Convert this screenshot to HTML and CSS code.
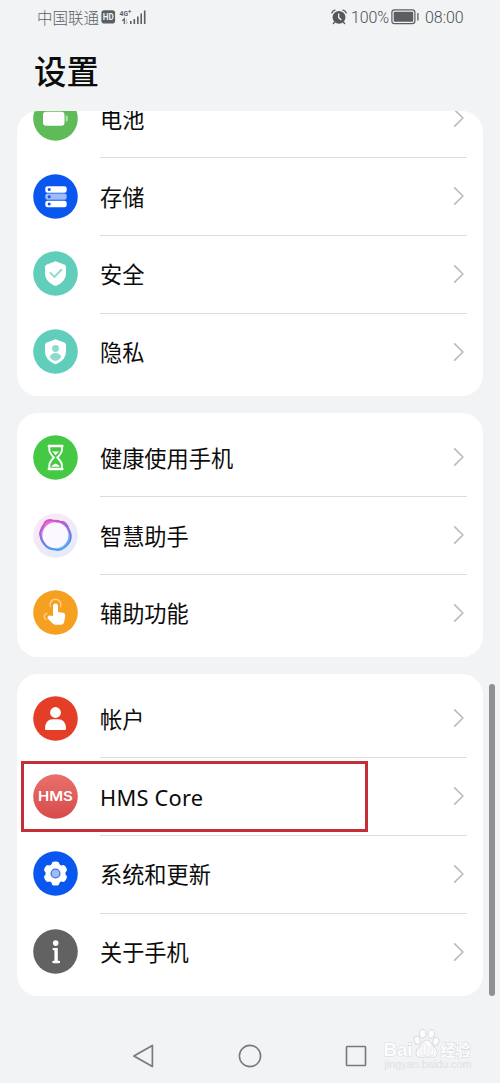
FILE: index.html
```html
<!DOCTYPE html>
<html lang="zh-CN">
<head>
<meta charset="utf-8">
<title>设置</title>
<link rel="stylesheet" href="styles.css">
</head>
<body>
<svg class="defs" width="0" height="0" aria-hidden="true">
  <defs>
    <symbol id="chevron" viewBox="0 0 12 20"><path d="M1.7 1.9 L9.9 10 L1.7 18.1" fill="none" stroke="#bbbcbd" stroke-width="1.7" stroke-linejoin="round" stroke-linecap="round"/></symbol>
    <linearGradient id="hms" x1="0" y1="0" x2="0" y2="1"><stop offset="0" stop-color="#e9706a"/><stop offset="1" stop-color="#d64b4c"/></linearGradient>
    <linearGradient id="ring" x1="0.15" y1="0.1" x2="0.8" y2="0.95"><stop offset="0" stop-color="#e04ccb"/><stop offset="0.5" stop-color="#7b6fe0"/><stop offset="1" stop-color="#41a8ec"/></linearGradient>
    <linearGradient id="halo" x1="0.2" y1="0" x2="0.7" y2="1"><stop offset="0" stop-color="#fbeaf3"/><stop offset="1" stop-color="#e5eafb"/></linearGradient>
  </defs>
</svg>
<div class="phone">
  <header class="status">
    <div class="status-left">
      <span class="carrier">中国联通</span>
      <svg class="hd" width="15" height="14" viewBox="0 0 15 14"><rect x="0.4" y="0.2" width="13.7" height="13.3" rx="2.8" fill="#5c5f62"/><text x="7.3" y="10" text-anchor="middle" textLength="11" lengthAdjust="spacingAndGlyphs" class="hd-text">HD</text></svg>
      <svg class="signal" width="28" height="18" viewBox="0 0 28 18">
        <text x="0.5" y="7.6" textLength="8.5" lengthAdjust="spacingAndGlyphs" class="net">4G</text>
        <path d="M9.2 3.4h3M10.7 1.9v3" stroke="#5c5f62" stroke-width=".8"/>
        <path d="M5.3 16v-5.2l-2 2" fill="none" stroke="#5c5f62" stroke-width="1.2"/>
        <path d="M7.3 11v4.8l1.5-1.6" fill="none" stroke="#babcbe" stroke-width="1"/>
        <path d="M11.8 16v-3M15.3 16v-5M18.8 16V8.5M22.2 16V5.5M25.7 16V2.5" stroke="#5c5f62" stroke-width="1.6"/>
      </svg>
    </div>
    <div class="status-right">
      <svg class="alarm" width="16" height="16" viewBox="0 0 16 16"><circle cx="8" cy="8.3" r="6.4" fill="#56595c"/><path d="M.8 4 Q1.7 1.6 4 1.1M15.2 4 Q14.3 1.6 12 1.1M3.7 13 L2.4 14.5M12.3 13 L13.6 14.5" fill="none" stroke="#56595c" stroke-width="1.3" stroke-linecap="round"/><path d="M7.7 4.6v4l2.7 2.4" fill="none" stroke="#f1f3f5" stroke-width="1.3"/></svg>
      <span class="percent">100%</span>
      <svg class="battery" width="29" height="16" viewBox="0 0 29 16"><rect x=".9" y=".9" width="23" height="13.7" rx="2.7" fill="none" stroke="#5c5f62" stroke-width="1.2"/><rect x="2.7" y="2.7" width="19.5" height="10.1" rx="1" fill="#5c5f62"/><path d="M26.9 4v7.5" stroke="#5c5f62" stroke-width="1.3"/></svg>
      <span class="clock">08:00</span>
    </div>
  </header>
  <h1 class="title"><span>设置</span></h1>

  <main class="list">
    <section class="card card-scrolled">
      <div class="row">
        <svg class="icon" viewBox="0 0 45 45"><circle cx="22.5" cy="22.5" r="22.3" fill="#5fbb58"/><rect x="10" y="15.7" width="21.5" height="14" rx="3.2" fill="#fff"/><rect x="32.7" y="19.5" width="2" height="6" rx=".8" fill="#b9e1b6"/></svg>
        <div class="body"><span class="label">电池</span><svg class="chev"><use href="#chevron"/></svg></div>
      </div>
      <div class="row">
        <svg class="icon" viewBox="0 0 45 45"><circle cx="22.5" cy="22.5" r="22.3" fill="#0a57f0"/><rect x="12.3" y="12.2" width="21.4" height="6.5" rx="2.2" fill="#fff"/><rect x="12.3" y="19.6" width="21.4" height="6.2" rx="2.2" fill="#9dbcf9"/><rect x="12.3" y="26.8" width="21.4" height="6.5" rx="2.2" fill="#fff"/><g fill="#0a57f0"><circle cx="16.2" cy="15.5" r="1.5"/><circle cx="16.2" cy="22.7" r="1.5"/><circle cx="16.2" cy="30" r="1.5"/></g></svg>
        <div class="body"><span class="label">存储</span><svg class="chev"><use href="#chevron"/></svg></div>
      </div>
      <div class="row">
        <svg class="icon" viewBox="0 0 45 45"><circle cx="22.5" cy="22.5" r="22.3" fill="#61cdbb"/><path d="M22.5 10.2 L31.2 13.4 Q33 14.1 33 16 V22.6 Q33 30.5 24 34.4 Q22.5 35 21 34.4 Q12 30.5 12 22.6 V16 Q12 14.1 13.8 13.4 Z" fill="#fff"/><path d="M17 21.4 L21.4 25.9 L28.8 18.2" fill="none" stroke="#8bdccd" stroke-width="2"/></svg>
        <div class="body"><span class="label">安全</span><svg class="chev"><use href="#chevron"/></svg></div>
      </div>
      <div class="row">
        <svg class="icon" viewBox="0 0 45 45"><circle cx="22.5" cy="22.5" r="22.3" fill="#61cdbb"/><path d="M22.5 10.2 L31.2 13.4 Q33 14.1 33 16 V22.6 Q33 30.5 24 34.8 Q22.5 35.5 21 34.8 Q12 30.5 12 22.6 V16 Q12 14.1 13.8 13.4 Z" fill="#fff"/><circle cx="22.5" cy="19.5" r="3.4" fill="#8bdccd"/><path d="M16.7 28 Q18.2 24 22.5 24 Q26.8 24 28.3 28 Q26 31.5 22.5 32 Q19 31.5 16.7 28Z" fill="#8bdccd"/></svg>
        <div class="body"><span class="label">隐私</span><svg class="chev"><use href="#chevron"/></svg></div>
      </div>
    </section>

    <section class="card">
      <div class="row">
        <svg class="icon" viewBox="0 0 45 45"><circle cx="22.5" cy="22.5" r="22.3" fill="#45c945"/><path d="M15.8 11 H29.4 M15.8 34 H29.4" stroke="#fff" stroke-width="2.4" stroke-linecap="round"/><path d="M16.3 11.5 V15 Q16.5 18 20.9 22.5 Q16.5 27 16.3 30 V33.5 M28.9 11.5 V15 Q28.7 18 24.3 22.5 Q28.7 27 28.9 30 V33.5" fill="none" stroke="#fff" stroke-width="1.9"/><path d="M19 16 Q22.6 17.2 26.2 16 L22.6 20.3Z M18.2 31.8 Q19 29.8 22.5 28.6 Q26 29.8 26.8 31.8Z" fill="#fff"/></svg>
        <div class="body"><span class="label">健康使用手机</span><svg class="chev"><use href="#chevron"/></svg></div>
      </div>
      <div class="row">
        <svg class="icon" viewBox="0 0 45 45"><circle cx="22.5" cy="22.5" r="22.3" fill="url(#halo)"/><circle cx="22.3" cy="22.3" r="14" fill="#faf8fe"/><g fill="none" stroke="url(#ring)"><path d="M12 8.8 Q16 5.7 20 7.6 Q24 9 29.5 8.7 Q34 9.5 35.5 16 Q39.5 22 37.2 28 Q35 31.8 30.8 35 Q27 38.6 21.5 36.3 Q14.5 36.2 12.2 31.8 Q6.2 25 7 19.5 Q10.5 14.5 12 8.8Z" stroke-width="1.5"/><circle cx="22.4" cy="22.2" r="14.2" stroke-width="2.4" stroke-opacity=".75"/><ellipse cx="22.3" cy="22" rx="15.8" ry="14" transform="rotate(35 22.3 22)" stroke-width="1"/></g></svg>
        <div class="body"><span class="label">智慧助手</span><svg class="chev"><use href="#chevron"/></svg></div>
      </div>
      <div class="row">
        <svg class="icon" viewBox="0 0 45 45"><circle cx="22.5" cy="22.5" r="22.3" fill="#f6a021"/><path d="M17.5 17.2 A5.5 5.5 0 1 1 27.4 17.2 M14.3 23.5 Q11 24 11.3 27 Q11.6 29 13.5 30" fill="none" stroke="#fbd18b" stroke-width="1.5"/><path d="M20 26 V16 A2.5 2.5 0 0 1 25 16 V22 L30 22.8 Q32.5 23.4 32.2 26 L31.1 32.3 Q30.7 34.7 28.3 34.7 H22.7 Q21 34.7 19.5 33.2 L14.8 28.8 Q14 27.2 15.3 26 Q16.3 25 17.8 25.7 Z" fill="#fff"/></svg>
        <div class="body"><span class="label">辅助功能</span><svg class="chev"><use href="#chevron"/></svg></div>
      </div>
    </section>

    <section class="card">
      <div class="row">
        <svg class="icon" viewBox="0 0 45 45"><circle cx="22.5" cy="22.5" r="22.3" fill="#e43e27"/><circle cx="22.5" cy="16.5" r="5.4" fill="#fff"/><path d="M12 33 Q12 23.3 20 23.3 H25 Q33 23.3 33 33 Q33 34 32 34 H13 Q12 34 12 33Z" fill="#fff"/></svg>
        <div class="body"><span class="label">帐户</span><svg class="chev"><use href="#chevron"/></svg></div>
      </div>
      <div class="row">
        <svg class="icon" viewBox="0 0 45 45"><circle cx="22.5" cy="22.5" r="22.3" fill="url(#hms)"/><text x="5" y="27.4" textLength="34.8" lengthAdjust="spacingAndGlyphs" class="hms-text">HMS</text></svg>
        <div class="body"><span class="label latin">HMS Core</span><svg class="chev"><use href="#chevron"/></svg></div>
        <div class="highlight"></div>
      </div>
      <div class="row">
        <svg class="icon" viewBox="0 0 45 45"><circle cx="22.5" cy="22.5" r="22.3" fill="#0a57f0"/><g fill="#fff"><circle cx="22.5" cy="22.5" r="10"/><rect x="18.6" y="10.4" width="7.8" height="24.2" rx="3.2"/><rect x="18.6" y="10.4" width="7.8" height="24.2" rx="3.2" transform="rotate(60 22.5 22.5)"/><rect x="18.6" y="10.4" width="7.8" height="24.2" rx="3.2" transform="rotate(120 22.5 22.5)"/></g><circle cx="22.5" cy="22.5" r="4.4" fill="#9dbcf9" stroke="#3c74e6" stroke-width="1.3"/></svg>
        <div class="body"><span class="label">系统和更新</span><svg class="chev"><use href="#chevron"/></svg></div>
      </div>
      <div class="row">
        <svg class="icon" viewBox="0 0 45 45"><circle cx="22.5" cy="22.5" r="22.3" fill="#626262"/><circle cx="22.7" cy="14.1" r="2.8" fill="#fff"/><path d="M20.6 20.2 H23 M20.4 33 H26" fill="none" stroke="#fff" stroke-width="2.3" stroke-linecap="round"/><path d="M23.1 19.1v14" stroke="#fff" stroke-width="3.4"/></svg>
        <div class="body"><span class="label">关于手机</span><svg class="chev"><use href="#chevron"/></svg></div>
      </div>
    </section>
  </main>

  <nav class="navbar">
    <svg width="24" height="26" viewBox="0 0 24 26"><path d="M20.4 2.5 V23.5 L1.9 13Z" fill="none" stroke="#77797b" stroke-width="1.7" stroke-linejoin="round"/></svg>
    <svg width="24" height="26" viewBox="0 0 24 26"><circle cx="12" cy="13" r="10.6" fill="none" stroke="#77797b" stroke-width="1.6"/></svg>
    <svg width="24" height="26" viewBox="0 0 24 26"><rect x="2.5" y="3.5" width="19" height="19" rx=".7" fill="none" stroke="#77797b" stroke-width="1.6"/></svg>
  </nav>
  <div class="scrollbar"></div>
  <svg class="watermark" width="100" height="50" viewBox="0 0 100 50">
    <g fill="#fcfcfd" stroke="#d9dbde" stroke-width="1">
      <text x="3.5" y="36" textLength="29" lengthAdjust="spacingAndGlyphs" class="wm-brand">Bai</text>
      <ellipse cx="37.1" cy="20.2" rx="3" ry="4.1" transform="rotate(-12 37.1 20.2)"/><ellipse cx="42.8" cy="13.7" rx="3.2" ry="4.4"/><ellipse cx="51.2" cy="14" rx="3.2" ry="4.3" transform="rotate(12 51.2 14)"/><ellipse cx="55.8" cy="21.5" rx="3" ry="4" transform="rotate(15 55.8 21.5)"/>
      <path d="M46.5 20 Q50 20 52 24.5 Q57 29 57.2 32.5 Q57.4 37.5 52.5 37.3 Q46.5 36.5 41 37.3 Q35.7 37.5 35.9 32.5 Q36 29 41 25 Q43 20 46.5 20Z"/>
      <text x="39" y="34.8" textLength="15" lengthAdjust="spacingAndGlyphs" class="wm-du">du</text>
      <text x="60.5" y="35.5" textLength="30" lengthAdjust="spacingAndGlyphs" class="wm-cn">经验</text>
    </g>
    <text x="4.5" y="48" textLength="87" lengthAdjust="spacingAndGlyphs" class="wm-url">jingyan.baidu.com</text>
  </svg>
</div>
</body>
</html>
```
FILE: styles.css
```css
* { box-sizing: border-box; }
body {
  margin: 0;
  background: #f1f3f5;
  font-family: "Noto Sans CJK SC", sans-serif;
  color: #0c0c0c;
}
.defs { position: absolute; }
.phone {
  position: relative;
  width: 500px;
  height: 1083px;
  overflow: hidden;
  display: flex;
  flex-direction: column;
}
.status {
  height: 34px;
  flex: none;
  padding: 0 36px 0 37px;
  display: flex;
  justify-content: space-between;
  align-items: center;
  color: #5c5f62;
  font-size: 15.5px;
  line-height: 34px;
}
.status-left, .status-right { display: flex; align-items: center; }
.carrier { width: 64px; white-space: nowrap; font-weight: 300; }
.signal { margin-left: 3px; }
.hd-text { font: 700 8.5px Roboto, sans-serif; fill: #f1f3f5; }
.net { font: 700 8px Roboto, sans-serif; fill: #5c5f62; }
.percent, .clock { font-family: Roboto, sans-serif; font-weight: 300; font-size: 16px; padding-top: 2px; line-height: 32px; color: #4c4f52; }
.percent { margin-left: 4px; width: 38px; letter-spacing: -0.1px; }
.battery { margin-left: 2px; margin-right: 1px; }
.clock { margin-left: 4px; width: 39px; letter-spacing: -0.05px; }
.title {
  margin: 0;
  height: 77px;
  flex: none;
  padding-left: 34px;
  font-size: 32.5px;
  font-weight: 500;
  line-height: 72px;
}
.list {
  width: 466px;
  margin-left: 17px;
  display: flex;
  flex-direction: column;
  gap: 17px;
}
.card {
  background: #fff;
  border-radius: 21px;
  padding: 5.4px 16px 5.35px;
  overflow: hidden;
}
.card-scrolled { padding-top: 0; height: 285px; }
.card-scrolled .row:first-child { margin-top: -31.4px; }
.row {
  position: relative;
  height: 77.75px;
  display: flex;
  align-items: center;
}
.icon { width: 45px; height: 45px; flex: none; }
.body {
  flex: 1;
  height: 100%;
  margin-left: 22px;
  display: flex;
  align-items: center;
  justify-content: space-between;
  box-shadow: 0 1px 0 #dcdddf;
}
.row:last-child .body { box-shadow: none; }
.label { font-size: 22.2px; line-height: 30px; margin-top: -1px; white-space: nowrap; }
.latin { font-family: "Noto Sans", sans-serif; font-size: 21.8px; letter-spacing: 0.25px; margin-top: 3px; }
.chev { width: 12px; height: 20px; margin-right: 2px; }
.hms-text { font: 600 12.8px Inter, sans-serif; fill: #fff; }
.highlight {
  position: absolute;
  left: -12px;
  top: 4px;
  width: 347px;
  height: 71px;
  border: 3px solid #c42f37;
}
.navbar {
  height: 32px;
  margin: 44px 0 0;
  padding: 0 132px;
  display: flex;
  align-items: center;
  justify-content: space-between;
}
.scrollbar {
  position: absolute;
  left: 489px;
  top: 684px;
  width: 6px;
  height: 312px;
  border-radius: 3px;
  background: #909193;
}
.watermark { position: absolute; left: 380px; top: 1020px; }
.wm-brand { font: 700 19px "Liberation Sans", sans-serif; paint-order: stroke; }
.wm-du { font: 700 14px "Liberation Sans", sans-serif; paint-order: stroke; }
.wm-cn { font: 700 15.5px "Noto Sans CJK SC", sans-serif; paint-order: stroke; }
.wm-url { font: 400 10px "Liberation Sans", sans-serif; fill: #e0e2e4; }
```
